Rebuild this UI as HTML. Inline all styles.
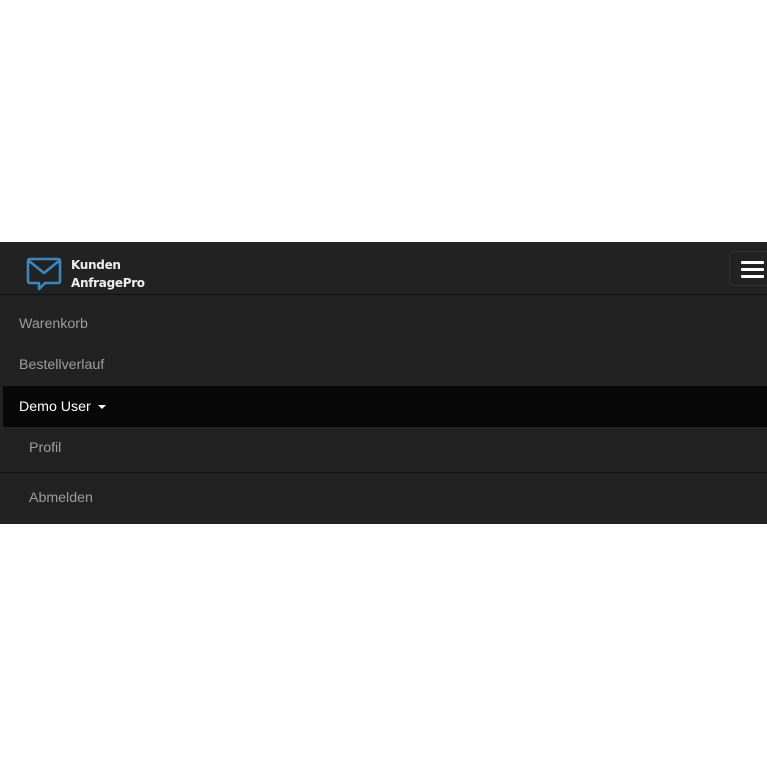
<!DOCTYPE html>
<html><head><meta charset="utf-8"><style>
*{margin:0;padding:0;box-sizing:border-box}
body{width:767px;height:767px;background:#fff;font-family:"Liberation Sans",sans-serif;position:relative;overflow:hidden}
.nav{position:absolute;left:0;top:242px;width:767px;height:282px;background:#222}
.hdr{position:absolute;left:0;top:0;width:767px;height:53px;border-bottom:1px solid #111}
.brand{position:absolute;left:71px;top:14px;color:#eee;font-family:"DejaVu Sans",sans-serif;font-weight:bold;font-size:12px;line-height:18px;letter-spacing:-0.3px}
.tog{position:absolute;left:729px;top:9px;width:50px;height:35px;border:1px solid #333;border-radius:5px}
.tog i{position:absolute;left:11px;width:23px;height:3px;background:#fff;border-radius:1px}
.it{position:absolute;font-size:14.2px;color:#9d9d9d}
.act{position:absolute;left:3px;top:144px;width:764px;height:41px;background:#080808}
.div{position:absolute;left:0;top:230px;width:767px;height:1px;background:#111}
</style></head><body>
<div class="nav">
 <div class="hdr">
  <svg style="position:absolute;left:25px;top:15px" width="38" height="36" viewBox="0 0 38 36">
   <path d="M5 2 H33 Q35 2 35 4 V24 Q35 26 33 26 H20 L14 32 V26 H5 Q3 26 3 24 V4 Q3 2 5 2 Z" fill="none" stroke="#3a88c2" stroke-width="2.6" stroke-linejoin="round"/>
   <path d="M4 4 L19 16 L34 4" fill="none" stroke="#3a88c2" stroke-width="2.6" stroke-linejoin="round"/>
  </svg>
  <div class="brand">Kunden<br>AnfragePro</div>
  <div class="tog"><i style="top:9px"></i><i style="top:16px"></i><i style="top:23px"></i></div>
 </div>
 <div class="it" style="left:19px;top:74px">Warenkorb</div>
 <div class="it" style="left:19px;top:115px">Bestellverlauf</div>
 <div class="act"></div>
 <div class="it" style="left:19px;top:157px;color:#fff">Demo User <span style="display:inline-block;width:0;height:0;border-left:4px solid transparent;border-right:4px solid transparent;border-top:4px solid #fff;vertical-align:middle;margin-left:3px"></span></div>
 <div class="it" style="left:29px;top:198px">Profil</div>
 <div class="div"></div>
 <div class="it" style="left:29px;top:248px">Abmelden</div>
</div>
</body></html>
